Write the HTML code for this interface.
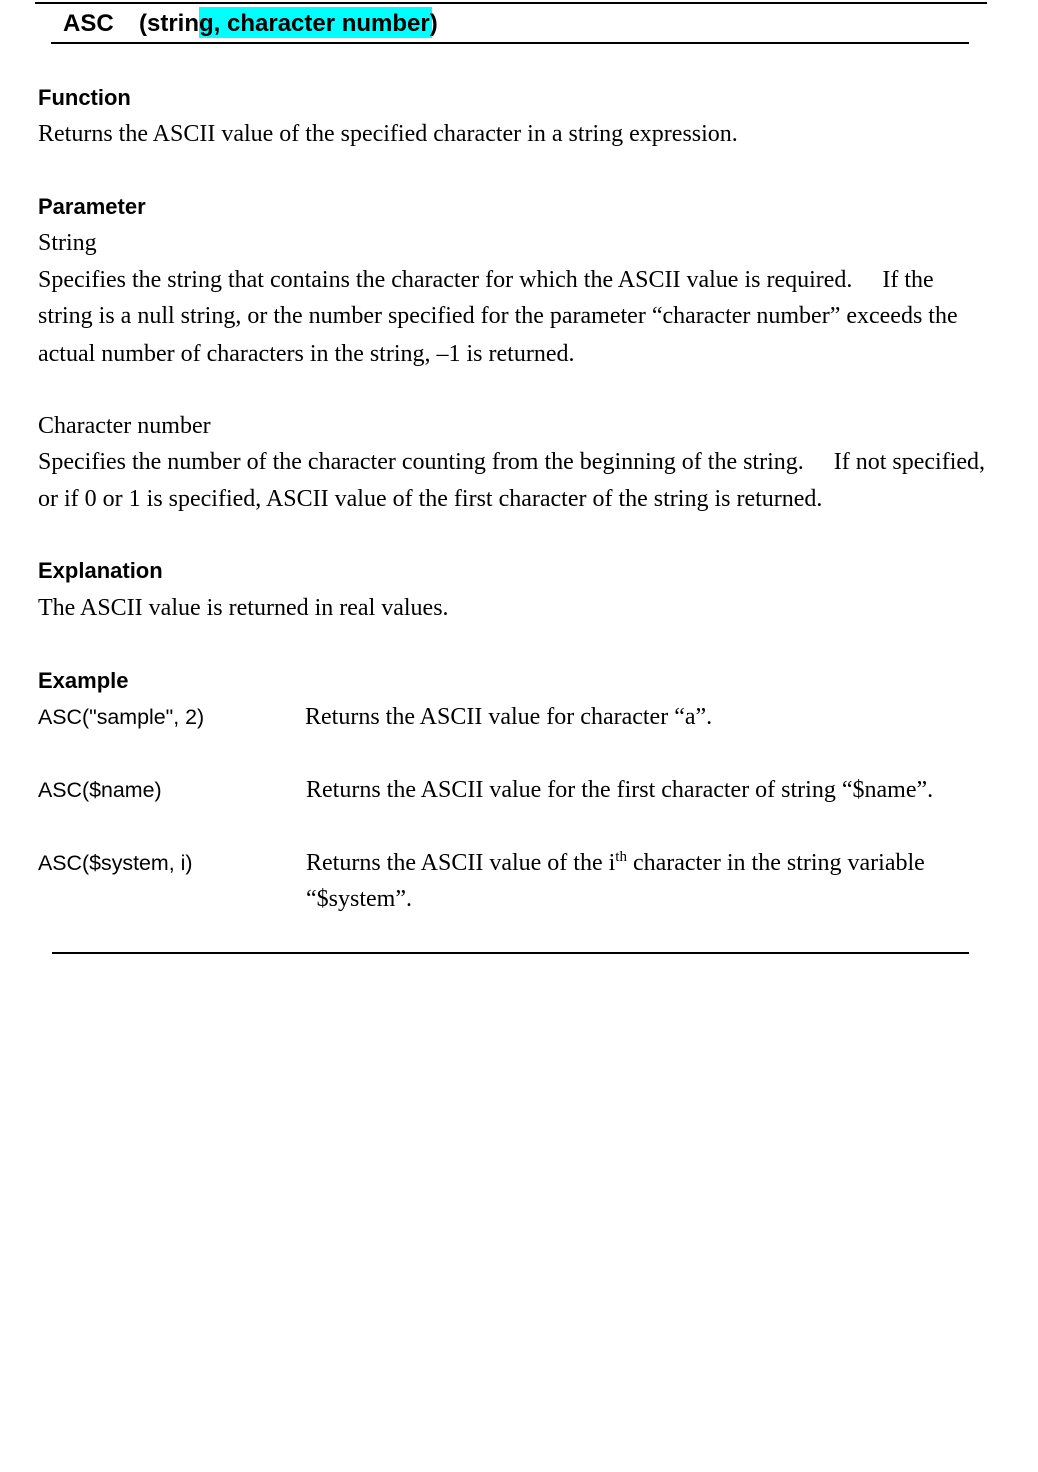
<!DOCTYPE html>
<html><head><meta charset="utf-8"><style>
body{margin:0;width:1038px;height:1472px;background:#fff;position:relative;color:#000;overflow:hidden}
.a{position:absolute;white-space:nowrap}
.s{font-family:"Liberation Serif",serif;font-size:24px;line-height:26px}
.h{font-family:"Liberation Sans",sans-serif;font-weight:bold;font-size:22px;line-height:24px}
.c{font-family:"Liberation Sans",sans-serif;font-size:21.4px;line-height:24px}
.l{position:absolute;height:2px;background:#000}
</style></head><body>
<div class="l" style="left:35px;top:2px;width:952px"></div>
<div class="a h" style="left:63px;top:10px;font-size:24px;line-height:28px">ASC</div>
<div class="a" style="left:199px;top:7px;width:233px;height:31px;background:#00ffff"></div>
<div class="a h" style="left:139px;top:10px;font-size:24px;line-height:28px">(string, character number)</div>
<div class="l" style="left:51px;top:42px;width:918px"></div>

<div class="a h" style="left:38px;top:86px">Function</div>
<div class="a s" style="left:38px;top:121px">Returns the ASCII value of the specified character in a string expression.</div>

<div class="a h" style="left:38px;top:195px">Parameter</div>
<div class="a s" style="left:38px;top:230px">String</div>
<div class="a s" style="left:38px;top:267px">Specifies the string that contains the character for which the ASCII value is required.&nbsp;&nbsp;&nbsp;&nbsp; If the</div>
<div class="a s" style="left:38px;top:303px">string is a null string, or the number specified for the parameter “character number” exceeds the</div>
<div class="a s" style="left:38px;top:341px">actual number of characters in the string, –1 is returned.</div>

<div class="a s" style="left:38px;top:413px">Character number</div>
<div class="a s" style="left:38px;top:449px">Specifies the number of the character counting from the beginning of the string.&nbsp;&nbsp;&nbsp;&nbsp; If not specified,</div>
<div class="a s" style="left:38px;top:486px">or if 0 or 1 is specified, ASCII value of the first character of the string is returned.</div>

<div class="a h" style="left:38px;top:559px">Explanation</div>
<div class="a s" style="left:38px;top:595px">The ASCII value is returned in real values.</div>

<div class="a h" style="left:38px;top:669px">Example</div>
<div class="a c" style="left:38px;top:705px">ASC("sample", 2)</div>
<div class="a s" style="left:305px;top:704px">Returns the ASCII value for character “a”.</div>
<div class="a c" style="left:38px;top:778px">ASC($name)</div>
<div class="a s" style="left:306px;top:777px">Returns the ASCII value for the first character of string “$name”.</div>
<div class="a c" style="left:38px;top:851px">ASC($system, i)</div>
<div class="a s" style="left:306px;top:850px">Returns the ASCII value of the i<sup style="font-size:15px;line-height:0">th</sup> character in the string variable</div>
<div class="a s" style="left:306px;top:886px">“$system”.</div>

<div class="l" style="left:52px;top:952px;width:917px"></div>
</body></html>
